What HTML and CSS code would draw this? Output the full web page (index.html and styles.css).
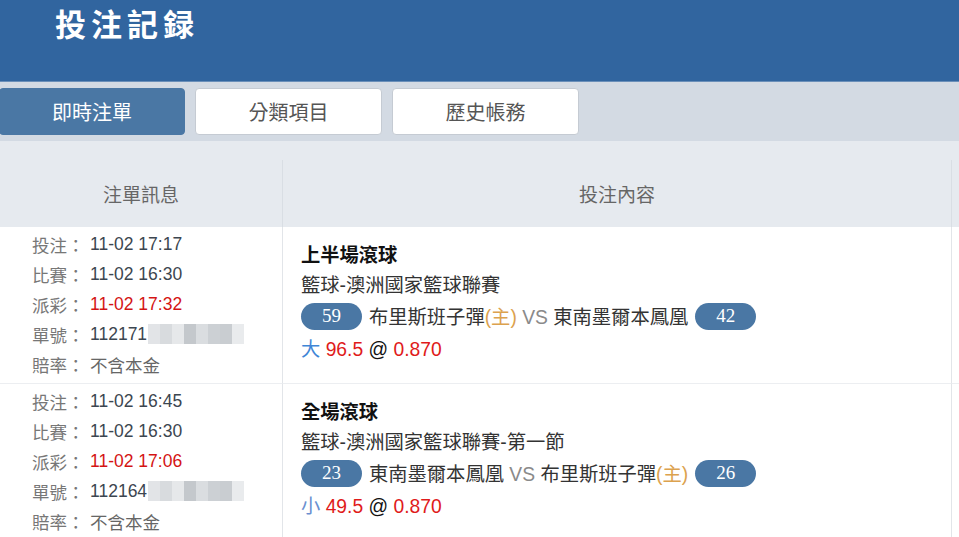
FILE: index.html
```html
<!DOCTYPE html>
<html>
    <head>
        <meta charset="utf-8">
        <title>投注記録</title>
        <link rel="stylesheet" href="styles.css">
    </head>
    <body>
        <header class="topbar">
            <h1 class="title">投注記録</h1>
        </header>

        <nav class="tabs">
            <a class="tab active">即時注單</a>
            <a class="tab">分類項目</a>
            <a class="tab">歷史帳務</a>
        </nav>

        <div class="strip"></div>

        <div class="records">
            <div class="cell head">注單訊息</div>
            <div class="cell head">投注內容</div>
            <div class="cell head extra"></div>

            <!-- 第一筆 -->
            <div class="cell info">
                <div class="line"><span class="label">投注：</span><span class="value">11-02 17:17</span></div>
                <div class="line"><span class="label">比賽：</span><span class="value">11-02 16:30</span></div>
                <div class="line"><span class="label">派彩：</span><span class="value red">11-02 17:32</span></div>
                <div class="line"><span class="label">單號：</span><span class="value">112171</span><span class="blur"><i></i><i></i><i></i><i></i><i></i><i></i><i></i><i></i></span></div>
                <div class="line"><span class="label">賠率：</span><span class="value soft">不含本金</span></div>
            </div>
            <div class="cell detail">
                <div class="bet-type">上半場滾球</div>
                <div class="league">籃球-澳洲國家籃球聯賽</div>
                <div class="match">
                    <span class="score">59</span>
                    <span class="team">布里斯班子彈<span class="home">(主)</span> <span class="vs">VS</span> 東南墨爾本鳳凰</span>
                    <span class="score">42</span>
                </div>
                <div class="pick"><span class="side">大</span> <span class="red">96.5</span> @ <span class="red">0.870</span></div>
            </div>
            <div class="cell extra"></div>

            <!-- 第二筆 -->
            <div class="cell info">
                <div class="line"><span class="label">投注：</span><span class="value">11-02 16:45</span></div>
                <div class="line"><span class="label">比賽：</span><span class="value">11-02 16:30</span></div>
                <div class="line"><span class="label">派彩：</span><span class="value red">11-02 17:06</span></div>
                <div class="line"><span class="label">單號：</span><span class="value">112164</span><span class="blur"><i></i><i></i><i></i><i></i><i></i><i></i><i></i><i></i></span></div>
                <div class="line"><span class="label">賠率：</span><span class="value soft">不含本金</span></div>
            </div>
            <div class="cell detail">
                <div class="bet-type">全場滾球</div>
                <div class="league">籃球-澳洲國家籃球聯賽-第一節</div>
                <div class="match">
                    <span class="score">23</span>
                    <span class="team">東南墨爾本鳳凰 <span class="vs">VS</span> 布里斯班子彈<span class="home">(主)</span></span>
                    <span class="score">26</span>
                </div>
                <div class="pick"><span class="side small">小</span> <span class="red">49.5</span> @ <span class="red">0.870</span></div>
            </div>
            <div class="cell extra"></div>
        </div>
    </body>
</html>
```

FILE: styles.css
```css
*{
    box-sizing: border-box;
}

body{
    margin: 0;
    font-family: "Liberation Sans", "Noto Sans CJK TC", sans-serif;
    background-color: #fff;
    color: #333;
}

.topbar{
    height: 82px;
    background-color: #31659f;
    border-bottom: 1px solid #6a8fb9;
    padding: 4px 0 0 55px;
}

.title{
    margin: 0;
    color: #fff;
    font-family: "Noto Sans CJK TC", sans-serif;
    font-weight: 700;
    font-size: 31px;
    line-height: 38px;
    letter-spacing: 5px;
}

.tabs{
    display: flex;
    gap: 10px;
    height: 59px;
    padding-top: 6px;
    background-color: #d3dae3;
}

.tab{
    display: flex;
    align-items: center;
    justify-content: center;
    width: 187px;
    height: 47px;
    border: 1px solid #c5cbd3;
    border-radius: 4px;
    background-color: #fff;
    color: #555;
    font-size: 20px;
}

.tab.active{
    width: 186px;
    margin-left: -1px;
    border-color: #4a77a4;
    background-color: #4a77a4;
    color: #fff;
}

.strip{
    height: 19px;
    background-color: #e6eaef;
}

.records{
    display: grid;
    grid-template-columns: 283px 669px 1fr;
}

.cell{
    border-right: 1px solid #e2e5e9;
    border-bottom: 1px solid #eceef1;
}

.cell.extra{
    border-right: none;
}

.cell.head{
    height: 67px;
    display: flex;
    align-items: center;
    justify-content: center;
    background-color: #e6eaef;
    border-right-color: #d9dee4;
    border-bottom: none;
    color: #666;
    font-size: 19px;
}

.info{
    padding: 2px 0 4px 32px;
    font-size: 17.5px;
}

.line{
    display: flex;
    align-items: center;
    height: 30px;
}

.label{
    width: 58px;
    color: #777;
}

.value{
    color: #3c4650;
}

.value.soft{
    color: #666;
}

.red{
    color: #e01b1b;
}

.value.red{
    color: #d41414;
}

.blur{
    display: flex;
    height: 20px;
    margin-left: 1px;
}

.blur i{
    width: 12px;
    height: 20px;
    background-color: #e2e4e7;
}

.blur i:nth-child(2){ background-color: #d8dbde; }
.blur i:nth-child(3){ background-color: #e6e8ea; }
.blur i:nth-child(4){ background-color: #c4c8cc; }
.blur i:nth-child(5){ background-color: #dadde0; }
.blur i:nth-child(6){ background-color: #ccd0d4; }
.blur i:nth-child(7){ background-color: #c9cdd1; }
.blur i:nth-child(8){ background-color: #e9ebed; }

.detail{
    padding: 14px 0 0 18px;
    font-size: 19.3px;
    color: #333;
}

.bet-type{
    height: 30px;
    line-height: 30px;
    font-weight: 700;
    color: #111;
}

.league{
    height: 30px;
    line-height: 30px;
}

.match{
    display: flex;
    align-items: center;
    gap: 7px;
    height: 30px;
}

.score{
    display: flex;
    align-items: center;
    justify-content: center;
    width: 61px;
    height: 27px;
    border-radius: 14px;
    background-color: #4a77a4;
    color: #fff;
    font-family: "Liberation Serif", serif;
    font-size: 19px;
}

.home{
    color: #dca24e;
}

.vs{
    color: #8a8a8a;
}

.pick{
    height: 38px;
    line-height: 38px;
    color: #111;
}

.side{
    color: #3f86d6;
}

.side.small{
    color: #6a8fd0;
}
```
